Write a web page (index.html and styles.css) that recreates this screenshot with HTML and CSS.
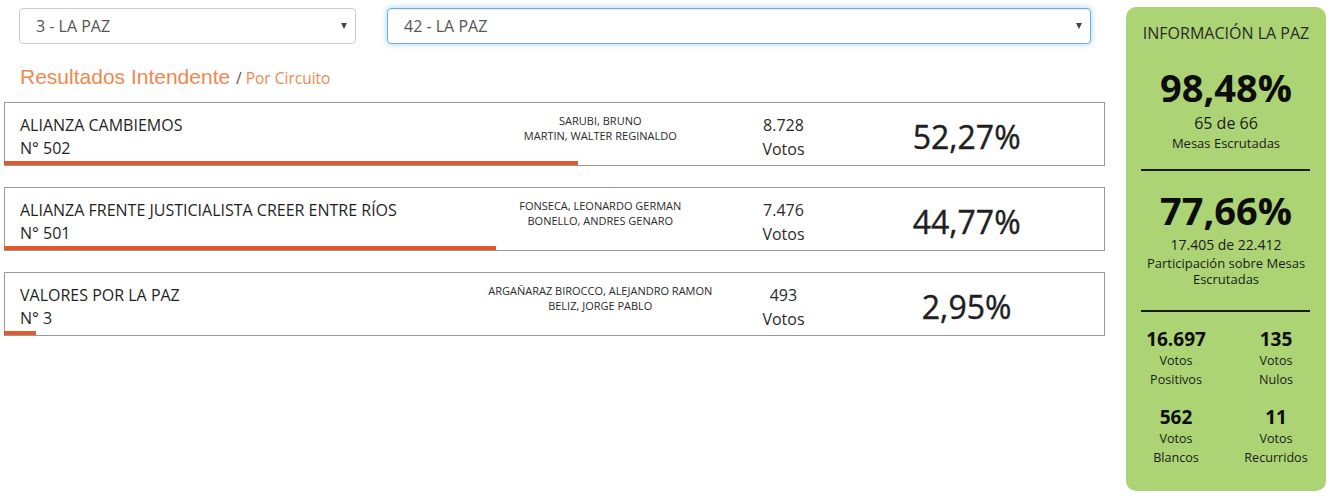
FILE: index.html
```html
<!DOCTYPE html>
<html lang="es">
<head>
<meta charset="utf-8">
<title>Resultados Intendente</title>
<link rel="stylesheet" href="styles.css">
</head>
<body>
<div class="page">
  <main class="main">
    <div class="filters">
      <div class="select select--sec">
        <span>3 - LA PAZ</span>
        <span class="caret"></span>
      </div>
      <div class="select select--circ select--focus">
        <span>42 - LA PAZ</span>
        <span class="caret"></span>
      </div>
    </div>

    <h2 class="title">Resultados Intendente <small>/ <span class="sub">Por Circuito</span></small></h2>

    <div class="results">
      <div class="result">
        <div class="result-row">
          <div class="col party">
            <div class="party-name">ALIANZA CAMBIEMOS</div>
            <div class="party-num">N° 502</div>
          </div>
          <div class="col cands">
            <div>SARUBI, BRUNO</div>
            <div>MARTIN, WALTER REGINALDO</div>
          </div>
          <div class="col votes">
            <div>8.728</div>
            <div>Votos</div>
          </div>
          <div class="col pct">52,27%</div>
        </div>
        <div class="bar" style="width:52.27%"></div>
      </div>

      <div class="result">
        <div class="result-row">
          <div class="col party">
            <div class="party-name">ALIANZA FRENTE JUSTICIALISTA CREER ENTRE RÍOS</div>
            <div class="party-num">N° 501</div>
          </div>
          <div class="col cands">
            <div>FONSECA, LEONARDO GERMAN</div>
            <div>BONELLO, ANDRES GENARO</div>
          </div>
          <div class="col votes">
            <div>7.476</div>
            <div>Votos</div>
          </div>
          <div class="col pct">44,77%</div>
        </div>
        <div class="bar" style="width:44.77%"></div>
      </div>

      <div class="result">
        <div class="result-row">
          <div class="col party">
            <div class="party-name">VALORES POR LA PAZ</div>
            <div class="party-num">N° 3</div>
          </div>
          <div class="col cands">
            <div>ARGAÑARAZ BIROCCO, ALEJANDRO RAMON</div>
            <div>BELIZ, JORGE PABLO</div>
          </div>
          <div class="col votes">
            <div>493</div>
            <div>Votos</div>
          </div>
          <div class="col pct">2,95%</div>
        </div>
        <div class="bar" style="width:2.95%"></div>
      </div>
    </div>
  </main>

  <aside class="info">
    <h3 class="info-title">INFORMACIÓN LA PAZ</h3>

    <div class="big big--first">98,48%</div>
    <div class="info-sub">65 de 66</div>
    <div class="info-label">Mesas Escrutadas</div>

    <div class="divider divider--first"></div>

    <div class="big big--second">77,66%</div>
    <div class="info-sub info-sub--small">17.405 de 22.412</div>
    <div class="info-label info-label--tight">Participación sobre Mesas Escrutadas</div>

    <div class="divider divider--second"></div>

    <div class="stats">
      <div class="stat">
        <div class="stat-num">16.697</div>
        <div class="stat-label">Votos<br>Positivos</div>
      </div>
      <div class="stat">
        <div class="stat-num">135</div>
        <div class="stat-label">Votos<br>Nulos</div>
      </div>
      <div class="stat">
        <div class="stat-num">562</div>
        <div class="stat-label">Votos<br>Blancos</div>
      </div>
      <div class="stat">
        <div class="stat-num">11</div>
        <div class="stat-label">Votos<br>Recurridos</div>
      </div>
    </div>
  </aside>
</div>
</body>
</html>
```

FILE: styles.css
```css
* {
  box-sizing: border-box;
}

body {
  margin: 0;
  background: #fff;
  color: #222;
  font-family: "Open Sans", "DejaVu Sans", sans-serif;
}

.page {
  display: flex;
  align-items: flex-start;
  gap: 21px;
  padding: 7px 0 0 4px;
}

.main {
  width: 1101px;
  flex: none;
}

/* selects */
.filters {
  display: flex;
  gap: 31px;
  padding: 1px 0 0 15px;
}

.select {
  height: 36px;
  border: 1px solid #ccc;
  border-radius: 4px;
  display: flex;
  align-items: center;
  justify-content: space-between;
  padding: 0 8px 0 16px;
  font-size: 16px;
  color: #555;
  background: #fff;
}

.select--sec {
  width: 337px;
}

.select--circ {
  width: 704px;
}

.select--focus {
  border-color: #66afe9;
  box-shadow: inset 0 1px 1px rgba(0, 0, 0, 0.075), 0 0 6px rgba(102, 175, 233, 0.6);
}

.caret {
  width: 0;
  height: 0;
  border-left: 3.5px solid transparent;
  border-right: 3.5px solid transparent;
  border-top: 6px solid #444;
}

/* title */
.title {
  height: 22px;
  margin: 22px 0 14px 16px;
  font-family: "Liberation Sans", Arial, sans-serif;
  font-weight: normal;
  font-size: 21px;
  line-height: 22px;
  color: #f0884e;
  white-space: nowrap;
}

.title small {
  font-family: "Open Sans", sans-serif;
  font-size: 15.5px;
  line-height: 22px;
  color: #555;
}

.title .sub {
  color: #f0884e;
}

/* results */
.result {
  border: 1px solid #999;
  margin-bottom: 21px;
}

.result-row {
  display: grid;
  grid-template-columns: 5fr 3fr 1fr 3fr;
  height: 58px;
}

.col {
  padding: 0 15px;
}

.party {
  padding-top: 11px;
  font-size: 16px;
  line-height: 23px;
  color: #1f1f1f;
  white-space: nowrap;
}

.cands {
  padding-top: 10px;
  font-size: 11px;
  line-height: 15px;
  text-align: center;
  color: #2a2a2a;
  white-space: nowrap;
}

.votes {
  padding: 10px 0 0;
  font-size: 16px;
  line-height: 24px;
  text-align: center;
  color: #2a2a2a;
}

.pct {
  padding-top: 14px;
  font-size: 32px;
  line-height: 40px;
  text-align: center;
  color: #1f1f1f;
  -webkit-text-stroke: 0.4px #1f1f1f;
}

.bar {
  height: 4px;
  background: #e2592b;
  margin-left: -1px;
}

/* info panel */
.info {
  width: 200px;
  flex: none;
  background: #add474;
  border-radius: 10px;
  padding: 15px 0 24px;
  text-align: center;
  color: #1a1a1a;
}

.info-title {
  margin: 0;
  font-weight: normal;
  font-size: 16px;
  line-height: 22px;
  color: #2a2a2a;
}

.big {
  font-size: 38px;
  line-height: 44px;
  font-weight: 700;
  color: #0d0d0d;
}

.big--first {
  margin-top: 21px;
}

.big--second {
  margin-top: 17px;
}

.info-sub {
  margin-top: 4px;
  font-size: 16px;
  line-height: 20px;
}

.info-sub--small {
  margin-top: 3px;
  font-size: 14px;
}

.info-label {
  font-size: 13px;
  line-height: 20px;
}

.info-label--tight {
  line-height: 16px;
  padding: 0 12px;
}

.divider {
  height: 2px;
  background: #1a1a1a;
  margin: 0 16px 0 15px;
}

.divider--first {
  margin-top: 16px;
}

.divider--second {
  margin-top: 23px;
}

.stats {
  display: grid;
  grid-template-columns: 1fr 1fr;
  row-gap: 16px;
  margin-top: 15px;
}

.stat-num {
  font-size: 19px;
  line-height: 24px;
  font-weight: 700;
  color: #0d0d0d;
}

.stat-label {
  font-size: 12.6px;
  line-height: 19px;
  color: #1a1a1a;
}
```
